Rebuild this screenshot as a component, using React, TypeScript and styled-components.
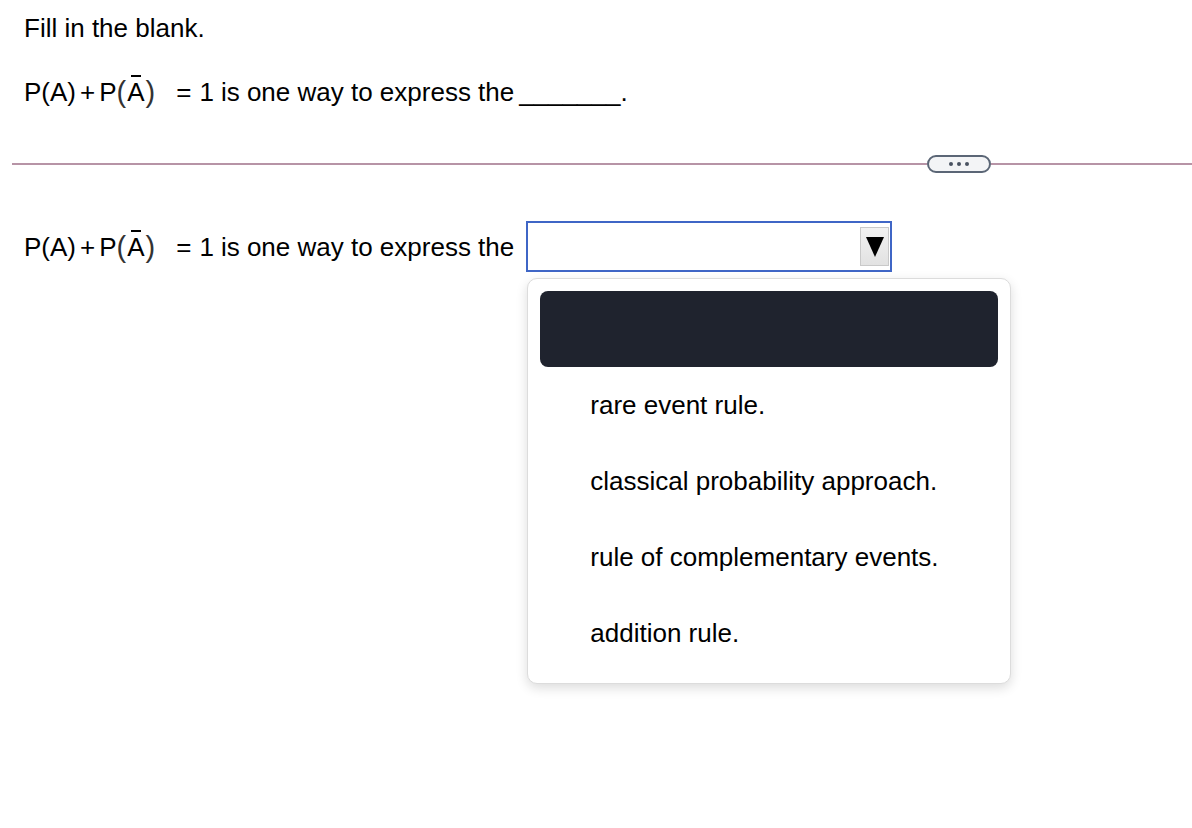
import React from 'react';
import styled, { createGlobalStyle } from 'styled-components';

const options = [
  'rare event rule.',
  'classical probability approach.',
  'rule of complementary events.',
  'addition rule.',
];

function Formula() {
  return (
    <FormulaWrap>
      <span>P(A)</span>
      <Operator>+</Operator>
      <span>P</span>
      <Paren>(</Paren>
      <Complement>A</Complement>
      <Paren>)</Paren>
      <Equals>=</Equals>
      <span>1</span>
    </FormulaWrap>
  );
}

export default function App() {
  return (
    <>
      <GlobalStyle />
      <Page>
        <Prompt>Fill in the blank.</Prompt>
        <Statement>
          <Formula />
          <Words>is one way to express the</Words>
          <Blank>_______</Blank>.
        </Statement>

        <Divider>
          <Rule />
          <MoreButton aria-label="more">
            <Dot />
            <Dot />
            <Dot />
          </MoreButton>
          <Rule $width="201px" />
        </Divider>

        <AnswerRow>
          <Lead>
            <Formula />
            <Words>is one way to express the</Words>
          </Lead>
          <SelectColumn>
            <SelectBox>
              <ArrowButton>
                <svg width="18" height="20" viewBox="0 0 18 20">
                  <polygon points="0,0 18,0 9,20" fill="#000" />
                </svg>
              </ArrowButton>
            </SelectBox>
            <Menu>
              <MenuHeader />
              {options.map((o) => (
                <MenuOption key={o}>{o}</MenuOption>
              ))}
            </Menu>
          </SelectColumn>
        </AnswerRow>
      </Page>
    </>
  );
}

const GlobalStyle = createGlobalStyle`
  body {
    margin: 0;
    background: #fff;
    font-family: "Liberation Sans", Arial, sans-serif;
    color: #000;
  }
`;

const Page = styled.div`
  padding: 13px 0 140px;
  font-size: 26px;
  line-height: 30px;
`;

const Prompt = styled.div`
  padding-left: 24px;
`;

const Statement = styled.div`
  margin-top: 33px;
  padding-left: 24px;
  display: flex;
  align-items: baseline;
  white-space: nowrap;
`;

const FormulaWrap = styled.span`
  display: inline-flex;
  align-items: baseline;
`;

const Operator = styled.span`
  margin: 0 4px;
`;

const Paren = styled.span`
  font-size: 29px;
  color: #333;
  position: relative;
  top: 1px;
`;

const Complement = styled.span`
  position: relative;
  margin: 0 1px;
  &::before {
    content: '';
    position: absolute;
    left: 4px;
    right: 4px;
    top: -2px;
    height: 2px;
    background: #000;
  }
`;

const Equals = styled.span`
  margin: 0 8px 0 21px;
`;

const Words = styled.span`
  margin-left: 7px;
`;

const Blank = styled.span`
  margin-left: 5px;
`;

const Divider = styled.div`
  margin-top: 47px;
  padding-left: 12px;
  height: 20px;
  display: flex;
  align-items: center;
`;

const Rule = styled.div<{ $width?: string }>`
  height: 2px;
  background: #b794a6;
  flex: ${({ $width }) => ($width ? `0 0 ${$width}` : '1')};
`;

const MoreButton = styled.button`
  box-sizing: border-box;
  width: 64px;
  height: 18px;
  padding: 0;
  border: 2px solid #5b6676;
  border-radius: 9px;
  background: #f3f4f6;
  display: flex;
  align-items: center;
  justify-content: center;
  gap: 4px;
`;

const Dot = styled.span`
  width: 4px;
  height: 4px;
  border-radius: 50%;
  background: #4a5261;
`;

const AnswerRow = styled.div`
  margin-top: 47px;
  padding-left: 24px;
  display: flex;
  align-items: flex-start;
  white-space: nowrap;
`;

const Lead = styled.div`
  height: 51px;
  display: flex;
  align-items: center;
`;

const SelectColumn = styled.div`
  margin-left: 12px;
  display: flex;
  flex-direction: column;
  gap: 6px;
`;

const SelectBox = styled.div`
  box-sizing: border-box;
  width: 366px;
  height: 51px;
  border: 2px solid #3f66c6;
  display: flex;
  align-items: center;
  justify-content: flex-end;
  padding-right: 1px;
`;

const ArrowButton = styled.div`
  box-sizing: border-box;
  width: 29px;
  height: 39px;
  background: linear-gradient(#f2f2f2, #e2e2e2);
  border: 1px solid #c9c9c9;
  display: flex;
  align-items: center;
  justify-content: center;
`;

const Menu = styled.div`
  margin-left: 1px;
  box-sizing: border-box;
  width: 484px;
  padding: 12px;
  background: #fff;
  border: 1px solid #dcdcdc;
  border-radius: 10px;
  box-shadow: 0 4px 12px rgba(0, 0, 0, 0.14);
`;

const MenuHeader = styled.div`
  height: 76px;
  border-radius: 8px;
  background: #1f232e;
`;

const MenuOption = styled.div`
  height: 76px;
  display: flex;
  align-items: center;
  padding-left: 50px;
`;
